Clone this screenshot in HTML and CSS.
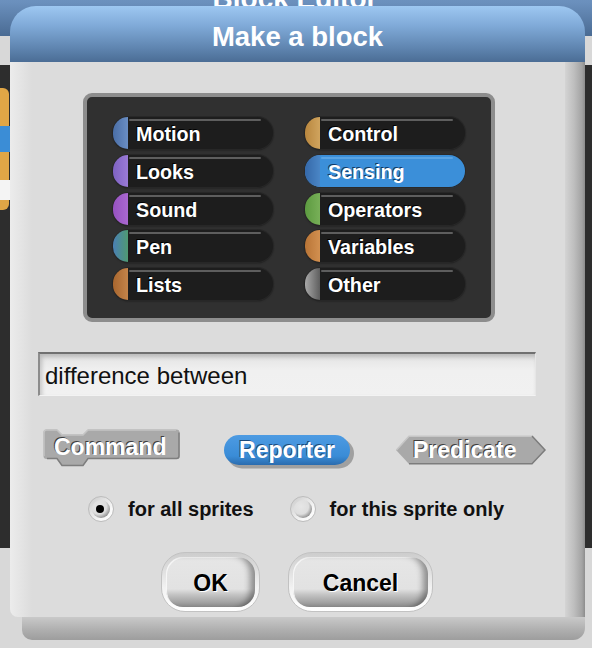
FILE: index.html
```html
<!DOCTYPE html>
<html>
<head>
<meta charset="utf-8">
<link rel="stylesheet" href="styles.css">
</head>
<body>
<div class="editor">
  <div class="editor-title">Block Editor</div>
  <div class="editor-body">
    <div class="scripts">
      <div class="hat">
        <span class="hat-pill">re</span>
        <span class="hat-slot"></span>
      </div>
    </div>
  </div>
</div>

<div class="dialog">
  <div class="titlebar">Make a block</div>
  <div class="lower">
    <div class="panel">
      <div class="palette">
        <div class="cat motion">Motion</div>
        <div class="cat control">Control</div>
        <div class="cat looks">Looks</div>
        <div class="cat sensing selected">Sensing</div>
        <div class="cat sound">Sound</div>
        <div class="cat operators">Operators</div>
        <div class="cat pen">Pen</div>
        <div class="cat variables">Variables</div>
        <div class="cat lists">Lists</div>
        <div class="cat other">Other</div>
      </div>

      <div class="name">difference between</div>

      <div class="types">
        <div class="type t-command">
          <svg class="shape" width="137" height="40" viewBox="0 0 137 40">
            <path d="M0.5,3.5 Q0.5,0.5 3.5,0.5 L14,0.5 L19,5.5 L40,5.5 L45,0.5 L133.5,0.5 Q136.5,0.5 136.5,3.5 L136.5,27 Q136.5,30 133.5,30 L45,30 L40,37 L19,37 L14,30 L3.5,30 Q0.5,30 0.5,27 Z" fill="#a9a9a9"/>
            <path d="M1,27 L1,3.5 Q1,1 3.5,1 L14,1 L19,6 L40,6 L45,1 L133,1" fill="none" stroke="#c4c4c4" stroke-width="1.5"/>
            <path d="M136,3.5 L136,27 Q136,29.5 133.5,29.5 L45,29.5 L40,36.5 L19,36.5 L14,29.5 L4,29.5" fill="none" stroke="#7e7e7e" stroke-width="1.5"/>
          </svg>
          <span class="tlabel">Command</span>
        </div>
        <div class="type t-reporter">
          <svg class="shape" width="132" height="36" viewBox="0 0 132 36">
            <defs>
              <linearGradient id="rg" x1="0" y1="0" x2="0" y2="1">
                <stop offset="0" stop-color="#4d9be2"/>
                <stop offset="0.7" stop-color="#3a8cd7"/>
                <stop offset="1" stop-color="#2b6cae"/>
              </linearGradient>
            </defs>
            <rect x="3" y="3.5" width="127" height="30" rx="15" fill="#6f6f6f" opacity="0.55"/>
            <rect x="0" y="0" width="126" height="30" rx="15" fill="url(#rg)"/>
          </svg>
          <span class="tlabel">Reporter</span>
        </div>
        <div class="type t-predicate">
          <svg class="shape" width="152" height="32" viewBox="0 0 152 32">
            <polygon points="1,15 14,1 137,1 150,15 137,29 14,29" fill="#a9a9a9"/>
            <polyline points="1.5,15 14,1.2 137,1.2" fill="none" stroke="#c6c6c6" stroke-width="1.5"/>
            <polyline points="137,1 150,15 137,28.8 14,28.8" fill="none" stroke="#7c7c7c" stroke-width="1.5"/>
          </svg>
          <span class="tlabel">Predicate</span>
        </div>
      </div>

      <div class="radios">
        <div class="radio"><span class="dot on"></span><span>for all sprites</span></div>
        <div class="radio second"><span class="dot"></span><span>for this sprite only</span></div>
      </div>

      <div class="buttons">
        <div class="btn ok"><div class="face">OK</div></div>
        <div class="btn cancel"><div class="face">Cancel</div></div>
      </div>
    </div>
    <div class="rshadow"></div>
    <div class="bshadow"></div>
  </div>
</div>
</body>
</html>
```
FILE: styles.css
```css
html, body {
  margin: 0;
  padding: 0;
}
body {
  width: 592px;
  height: 648px;
  overflow: hidden;
  position: relative;
  background: #d6d6d6;
  font-family: "Liberation Sans", Arial, sans-serif;
}

/* background window */
.editor {
  position: absolute;
  left: -50px;
  top: -30px;
  width: 690px;
  height: 700px;
  background: #d8d8d8;
}
.editor-title {
  height: 66px;
  box-sizing: border-box;
  padding-top: 15px;
  background: linear-gradient(#7ea4d0, #6a8fbc 50%, #4a6b93);
  color: #fff;
  font-weight: bold;
  font-size: 28px;
  line-height: 28px;
  text-align: center;
}
.editor-body {
  padding-top: 29px;
}
.scripts {
  position: relative;
  height: 483px;
  background: #2d2d2d;
}
.hat {
  position: absolute;
  left: 0;
  top: 23px;
  width: 59px;
  height: 122px;
  background: #e0a646;
  border-radius: 0 6px 6px 0;
}
.hat-pill {
  position: absolute;
  right: -30px;
  top: 38px;
  width: 90px;
  height: 26px;
  border-radius: 13px;
  background: #3b8dd6;
  color: #fff;
  font-weight: bold;
  font-size: 20px;
  line-height: 26px;
  padding-left: 32px;
  box-sizing: border-box;
}
.hat-slot {
  position: absolute;
  right: -20px;
  top: 92px;
  width: 60px;
  height: 20px;
  background: #f4f4f4;
  border-radius: 3px;
}

/* dialog */
.dialog {
  position: absolute;
  left: 10px;
  top: 6px;
  width: 575px;
  height: 634px;
  display: flex;
  flex-direction: column;
}
.titlebar {
  height: 56px;
  flex: none;
  overflow: hidden;
  border-radius: 26px 26px 0 0;
  background: linear-gradient(#9dc7f1, #80aad8 35%, #5f85b0 75%, #4b6d95);
  color: #fff;
  font-weight: bold;
  font-size: 27.5px;
  line-height: 62px;
  text-align: center;
}
.lower {
  display: grid;
  grid-template-columns: 555px 20px;
  grid-template-rows: 555px 23px;
}
.panel {
  grid-row: 1;
  grid-column: 1;
  background: linear-gradient(to right, #ececec, #dcdcdc 22px);
  border-bottom-left-radius: 8px;
  display: flex;
  flex-direction: column;
}
.rshadow {
  grid-row: 1;
  grid-column: 2;
  background: linear-gradient(to right, #d4d4d4, #bebebe 45%, #a3a3a3 85%, #8c8c8c);
}
.bshadow {
  grid-row: 2;
  grid-column: 1 / 3;
  margin-left: 12px;
  border-radius: 0 0 12px 10px;
  background: linear-gradient(#c9c9c9, #adadad 60%, #9d9d9d);
}

/* palette */
.palette {
  margin: 31px 0 0 73px;
  width: 412px;
  height: 229px;
  box-sizing: border-box;
  border: 4px solid #8d8d8d;
  border-radius: 9px;
  background: #303030;
  padding: 20px 0 0 26px;
  display: grid;
  grid-template-columns: 160px 160px;
  grid-auto-rows: 32px;
  column-gap: 32px;
  row-gap: 5.75px;
  align-content: start;
}
.cat {
  position: relative;
  height: 32px;
  box-sizing: border-box;
  border-radius: 16px;
  background: #1d1d1d;
  box-shadow: 0 0 0 1px #272727, 0 1px 2px #151515;
  color: #fff;
  font-weight: bold;
  font-size: 19.7px;
  line-height: 30px;
  padding: 2px 0 0 23px;
  text-shadow: -1px -1px 0 #000;
}
.cat::before {
  content: "";
  position: absolute;
  left: 0;
  top: 0;
  width: 15px;
  height: 32px;
  border-radius: 16px 0 0 16px;
  background: var(--cap);
}
.cat::after {
  content: "";
  position: absolute;
  top: 2px;
  left: 16px;
  right: 12px;
  height: 2px;
  border-radius: 1px;
  background: #5e5e5e;
}
.motion { --cap: linear-gradient(to right, #4a6ea6, #6a8ec4); }
.looks { --cap: linear-gradient(to right, #7e62c2, #9a7ad6); }
.sound { --cap: linear-gradient(to right, #9652c0, #aa68d0); }
.pen { --cap: linear-gradient(to right, #4a7fb4, #4f9a72); }
.lists { --cap: linear-gradient(to right, #a8662e, #c4844a); }
.control { --cap: linear-gradient(to right, #b8863e, #d0a45e); }
.sensing { --cap: linear-gradient(to right, #3568a8, #4a86c6); }
.operators { --cap: linear-gradient(to right, #5c9a40, #78b058); }
.variables { --cap: linear-gradient(to right, #b87436, #d29050); }
.other { --cap: linear-gradient(to right, #a8a8a8, #5e5e5e); }

.cat.selected {
  background: #3b8fd9;
  box-shadow: 0 0 0 1px #2a2a2a, 0 1px 1px #1c4f80;
  text-shadow: -1px -1px 0 #123a66;
}
.cat.selected::after {
  background: #5aa4e4;
}

/* name field */
.name {
  margin: 30px 0 0 28px;
  width: 498px;
  height: 44px;
  box-sizing: border-box;
  background: linear-gradient(#e2e2e2, #f0f0f0 40%, #f1f1f1);
  border-top: 2px solid #707070;
  border-left: 2px solid #8c8c8c;
  border-right: 1px solid #e6e6e6;
  border-bottom: 1px solid #f3f3f3;
  box-shadow: inset 2px 3px 4px rgba(0, 0, 0, 0.18);
  font-size: 24px;
  line-height: 38px;
  padding: 3px 0 0 5px;
  color: #111;
}

/* block types */
.types {
  margin-top: 33px;
  height: 40px;
  display: flex;
  align-items: flex-start;
  padding-left: 33px;
}
.type {
  position: relative;
  flex: none;
}
.shape {
  position: absolute;
  left: 0;
  top: 0;
}
.tlabel {
  position: relative;
  display: block;
  color: #fff;
  font-weight: bold;
  font-size: 23px;
  line-height: 22px;
  white-space: nowrap;
  text-shadow: -1px -1px 0 #3e3e3e;
}
.t-command {
  width: 137px;
  height: 40px;
}
.t-command .tlabel {
  padding: 7px 0 0 11px;
}
.t-reporter {
  width: 132px;
  height: 36px;
  margin: 6px 0 0 44px;
}
.t-reporter .tlabel {
  width: 126px;
  text-align: center;
  padding-top: 4px;
  text-shadow: -1px -1px 0 #1d4a7a;
}
.t-predicate {
  width: 152px;
  height: 32px;
  margin: 6px 0 0 39px;
}
.t-predicate .tlabel {
  padding: 4px 0 0 18px;
}

/* radios */
.radios {
  margin-top: 27px;
  height: 26px;
  display: flex;
  align-items: center;
  padding-left: 78px;
}
.radio {
  display: flex;
  align-items: center;
  gap: 14px;
  font-weight: bold;
  font-size: 20px;
  color: #111;
}
.radio.second {
  margin-left: 36px;
}
.dot {
  position: relative;
  width: 26px;
  height: 26px;
  box-sizing: border-box;
  border-radius: 50%;
  border: 1px solid #bcbcbc;
  background: linear-gradient(135deg, #c9c9c9, #f8f8f8 70%, #ffffff);
  flex: none;
}
.dot::before {
  content: "";
  position: absolute;
  left: 3px;
  top: 3px;
  width: 18px;
  height: 18px;
  border-radius: 50%;
  background: radial-gradient(circle at 38% 36%, #e6e6e6 0, #dedede 48%, #9a9a9a 72%, #5e5e5e 100%);
}
.dot.on::after {
  content: "";
  position: absolute;
  left: 7px;
  top: 8px;
  width: 8px;
  height: 8px;
  border-radius: 50%;
  background: #000;
}

/* buttons */
.buttons {
  margin-top: 30px;
  display: flex;
  gap: 28px;
  padding-left: 151px;
}
.btn {
  box-sizing: border-box;
  height: 60px;
  border-radius: 24px;
  padding: 4px;
  background: linear-gradient(#cdcdcd, #f2f2f2 60%, #ffffff);
  border: 1px solid #c2c2c2;
}
.ok { width: 99px; }
.cancel { width: 145px; }
.face {
  height: 100%;
  box-sizing: border-box;
  border-radius: 17px;
  background: linear-gradient(#e6e6e6 0, #e2e2e2 64%, #c2c2c2 76%, #8e8e8e 100%);
  box-shadow: inset -8px 0 6px -3px rgba(0, 0, 0, 0.38), inset 1px 1px 0 #f6f6f6;
  display: flex;
  align-items: center;
  justify-content: center;
  padding-top: 3px;
  font-weight: bold;
  font-size: 23px;
  color: #000;
  text-shadow: 1px 1px 0 #fff;
}
```
